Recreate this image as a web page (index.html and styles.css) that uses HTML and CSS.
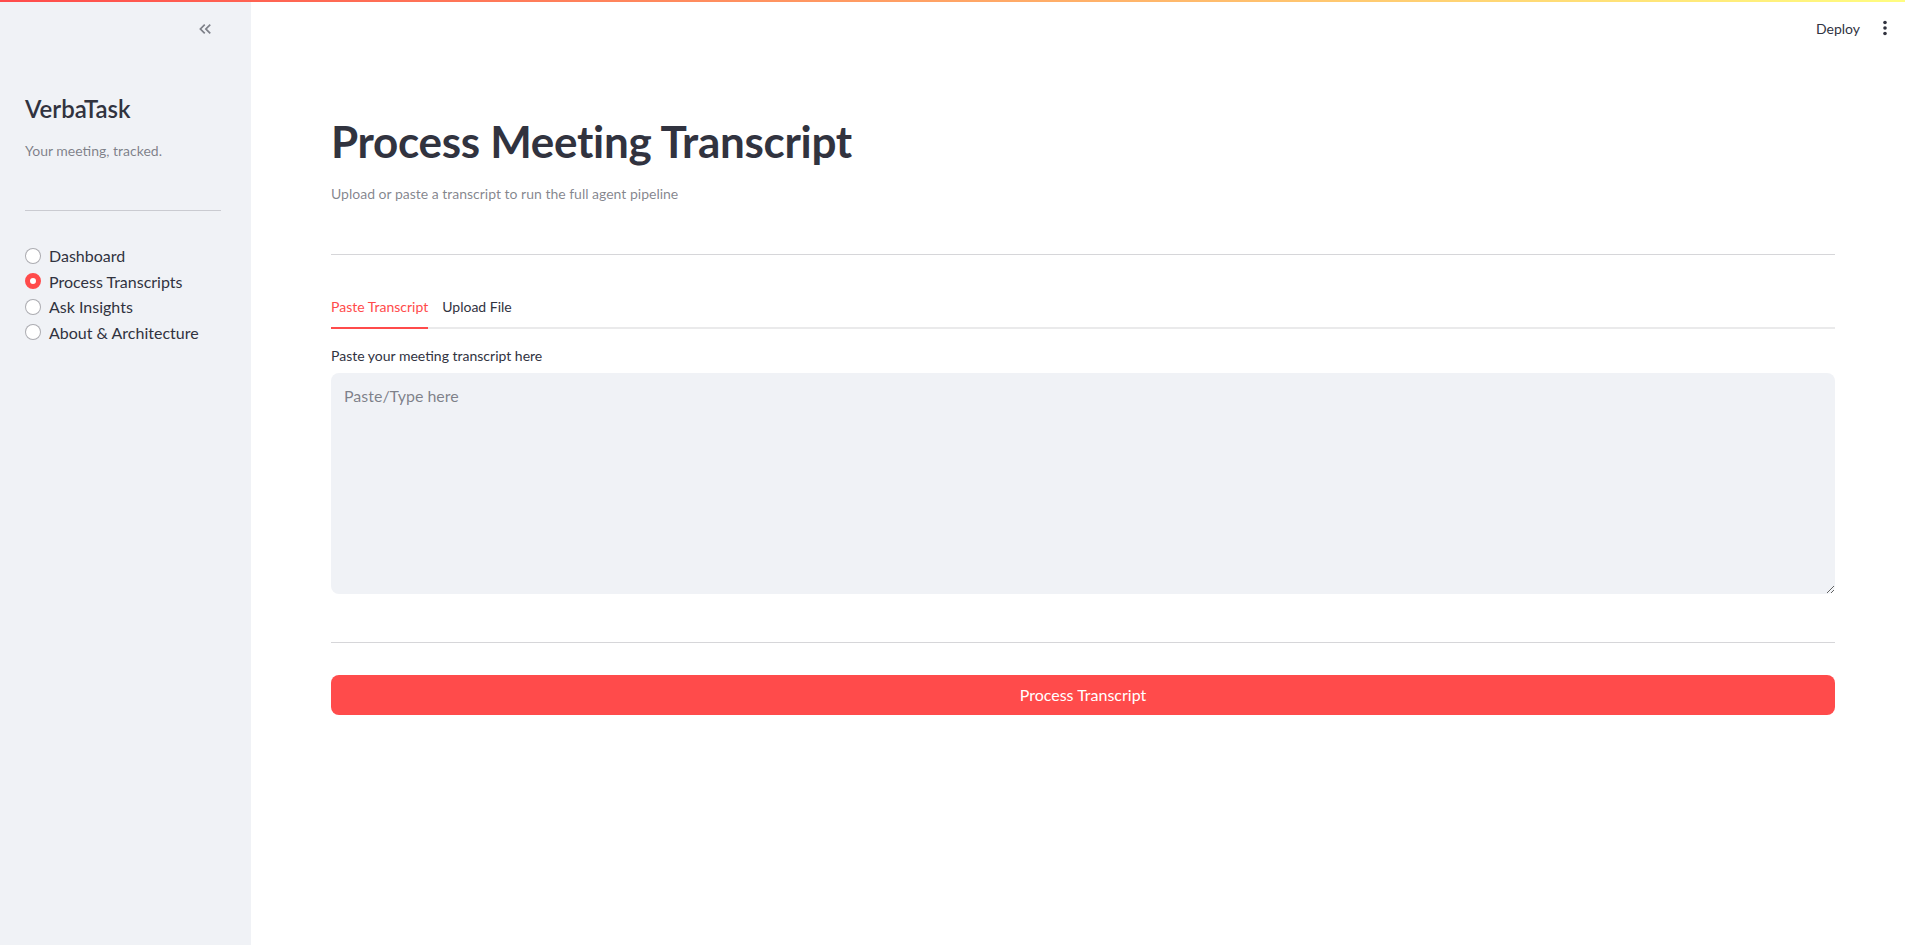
FILE: index.html
```html
<!DOCTYPE html>
<html lang="en">
<head>
    <meta charset="UTF-8">
    <meta name="viewport" content="width=device-width, initial-scale=1.0">
    <title>VerbaTask</title>
    <link rel="stylesheet" href="styles.css">
</head>
<body>
    <div class="decoration"></div>
    <aside class="sidebar">
        <div class="sidebar-top">
            <button class="collapse-btn" title="Collapse sidebar">
                <svg width="20" height="20" viewBox="0 0 24 24"><path d="M17.59 18 19 16.59 14.42 12 19 7.41 17.59 6l-6 6z M11 18l1.41-1.41L7.83 12l4.58-4.59L11 6l-6 6z" fill="currentColor"/></svg>
            </button>
        </div>
        <h3 class="brand">VerbaTask</h3>
        <p class="tagline">Your meeting, tracked.</p>
        <hr class="side-rule">
        <div class="radio-group">
            <label class="radio"><span class="dot"></span>Dashboard</label>
            <label class="radio checked"><span class="dot"></span>Process Transcripts</label>
            <label class="radio"><span class="dot"></span>Ask Insights</label>
            <label class="radio"><span class="dot"></span>About &amp; Architecture</label>
        </div>
    </aside>

    <div class="main">
        <header class="topbar">
            <span class="deploy">Deploy</span>
            <button class="menu-btn" title="Main menu">
                <svg width="6" height="16" viewBox="0 0 6 16"><circle cx="3" cy="2.5" r="1.8"/><circle cx="3" cy="8" r="1.8"/><circle cx="3" cy="13.5" r="1.8"/></svg>
            </button>
        </header>

        <section class="content">
            <h1 class="page-title">Process Meeting Transcript</h1>
            <p class="page-sub">Upload or paste a transcript to run the full agent pipeline</p>
            <hr class="rule">

            <div class="tabs">
                <div class="tab active">Paste Transcript</div>
                <div class="tab">Upload File</div>
            </div>

            <div class="field">
                <label for="transcript" class="field-label">Paste your meeting transcript here</label>
                <textarea id="transcript" placeholder="Paste/Type here"></textarea>
            </div>

            <hr class="rule rule-lower">

            <button class="primary-btn">Process Transcript</button>
        </section>
    </div>
</body>
</html>
```

FILE: styles.css
```css
* {
    box-sizing: border-box;
}
body {
    margin: 0;
    font-family: "Source Sans Pro", Lato, sans-serif;
    color: rgb(49, 51, 63);
    background-color: #fff;
    display: flex;
    min-height: 100vh;
}
.decoration {
    position: fixed;
    top: 0;
    left: 0;
    right: 0;
    height: 2px;
    background-image: linear-gradient(90deg, rgb(255, 75, 75), rgb(255, 253, 128));
    z-index: 10;
}

/* sidebar */
.sidebar {
    width: 251px;
    flex-shrink: 0;
    background-color: #f0f2f6;
    padding: 0 30px 0 25px;
}
.sidebar-top {
    height: 58px;
    display: flex;
    justify-content: flex-end;
    align-items: center;
    padding-right: 6px;
}
.collapse-btn {
    border: none;
    background: none;
    padding: 0;
    color: rgba(49, 51, 63, 0.6);
    display: flex;
    cursor: pointer;
}
.brand {
    margin: 37px 0 0;
    font-size: 24px;
    font-weight: 600;
    line-height: 1.2;
}
.tagline {
    margin: 18px 0 0;
    font-size: 14px;
    color: rgba(49, 51, 63, 0.6);
}
.side-rule {
    border: none;
    border-top: 1px solid rgba(49, 51, 63, 0.2);
    margin: 51px 0 0;
}
.radio-group {
    margin-top: 34px;
    display: flex;
    flex-direction: column;
    gap: 4px;
}
.radio {
    display: flex;
    align-items: center;
    gap: 8px;
    font-size: 16px;
    height: 21.5px;
}
.radio .dot {
    width: 16px;
    height: 16px;
    border-radius: 50%;
    border: 1px solid rgba(49, 51, 63, 0.4);
    background-color: #fff;
    flex-shrink: 0;
}
.radio.checked .dot {
    border: 5px solid #ff4b4b;
    background-color: #fff;
}

/* main */
.main {
    flex: 1;
    min-width: 0;
}
.topbar {
    height: 56px;
    display: flex;
    justify-content: flex-end;
    align-items: center;
    padding-right: 17px;
    gap: 22px;
}
.deploy {
    font-size: 14px;
}
.menu-btn {
    border: none;
    background: none;
    padding: 0;
    display: flex;
    fill: rgb(49, 51, 63);
}
.content {
    padding: 0 70px 0 80px;
}
.page-title {
    margin: 59px 0 0;
    font-size: 44px;
    font-weight: 700;
    line-height: 1.2;
    letter-spacing: -0.3px;
}
.page-sub {
    margin: 17px 0 0;
    font-size: 14px;
    color: rgba(49, 51, 63, 0.6);
}
.rule {
    border: none;
    border-top: 1px solid rgba(49, 51, 63, 0.2);
    margin: 52px 0 0;
}
.tabs {
    margin-top: 43px;
    display: flex;
    gap: 14px;
    border-bottom: 2px solid rgba(49, 51, 63, 0.1);
}
.tab {
    font-size: 14px;
    padding-bottom: 12px;
    margin-bottom: -2px;
    border-bottom: 2px solid transparent;
}
.tab.active {
    color: #ff4b4b;
    border-bottom-color: #ff4b4b;
}
.field {
    margin-top: 18px;
}
.field-label {
    display: block;
    font-size: 14px;
    margin-bottom: 9px;
}
textarea {
    display: block;
    width: 100%;
    height: 221px;
    border: none;
    border-radius: 8px;
    background-color: #f0f2f6;
    padding: 13px 13px 10px;
    font-family: inherit;
    font-size: 16px;
    color: rgb(49, 51, 63);
    resize: vertical;
    outline: none;
}
textarea::placeholder {
    color: rgba(49, 51, 63, 0.6);
}
.rule-lower {
    margin-top: 48px;
}
.primary-btn {
    display: block;
    width: 100%;
    margin-top: 32px;
    height: 40px;
    border: none;
    border-radius: 8px;
    background-color: #ff4b4b;
    color: #fff;
    font-family: inherit;
    font-size: 16px;
    cursor: pointer;
}
```
